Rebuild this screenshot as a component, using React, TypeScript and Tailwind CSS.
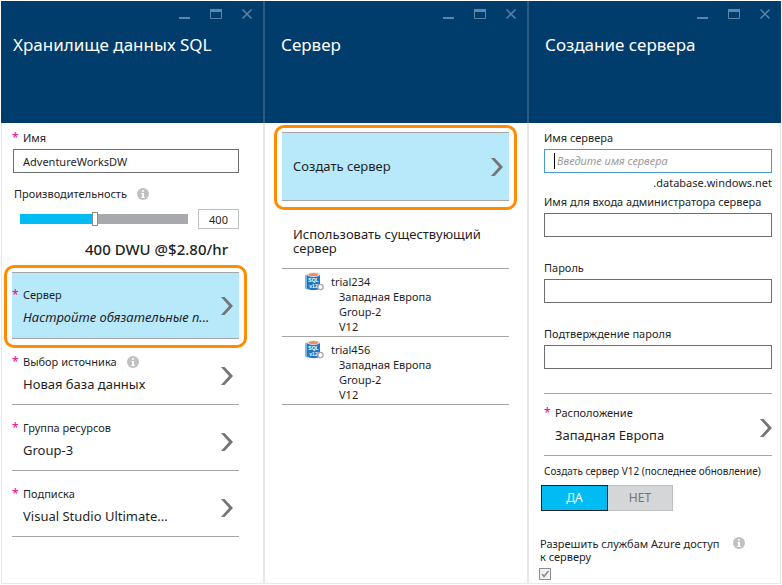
import { useId, useState } from "react";
import type { ReactNode } from "react";

function WindowControls() {
  return (
    <div className="flex justify-end gap-5 text-[#5c85aa]">
      <button type="button" aria-label="Свернуть" className="h-3 w-[11px]">
        <svg viewBox="0 0 11 12" className="h-3 w-[11px]" fill="none" stroke="currentColor" strokeWidth="2">
          <path d="M0 10H11" />
        </svg>
      </button>
      <button type="button" aria-label="Развернуть" className="h-3 w-3">
        <svg viewBox="0 0 12 12" className="h-3 w-3" fill="none" stroke="currentColor">
          <path d="M.5 1.5H11.5V10.5H.5Z" />
          <path d="M0 2.5H12" strokeWidth="3" />
        </svg>
      </button>
      <button type="button" aria-label="Закрыть" className="h-3 w-[10px]">
        <svg viewBox="0 0 10 12" className="h-3 w-[10px]" fill="none" stroke="currentColor" strokeWidth="1.5">
          <path d="M.5 1.5L9.5 10.5M9.5 1.5L.5 10.5" />
        </svg>
      </button>
    </div>
  );
}

function Blade({ title, inset, divider, children }: { title: string; inset: string; divider?: boolean; children: ReactNode }) {
  return (
    <section className={divider ? "flex min-w-0 flex-col border-l-2 border-[#e8e8e8]" : "flex min-w-0 flex-col"}>
      <header className={`h-[122px] bg-[#003c6c] pt-[7px] pr-[11px] ${divider ? "-ml-[2px] border-l-2 border-[#2b5a83]" : ""}`}>
        <WindowControls />
        <h2 className={`mt-[11px] text-[17px] leading-7 text-white ${inset}`}>{title}</h2>
      </header>
      {children}
    </section>
  );
}

function Star() {
  return <span className="w-[11px] shrink-0 text-xs text-[#ec008c]">*</span>;
}

function InfoIcon() {
  return (
    <svg viewBox="0 0 12 12" className="h-3 w-3 shrink-0" role="img" aria-label="Сведения">
      <circle cx="6" cy="6" r="6" fill="#bfc1c2" />
      <path d="M5 2.2H7V3.8H5ZM4.4 5H7V9H7.8V10H4.3V9H5.1V6H4.4Z" fill="#fff" />
    </svg>
  );
}

function Chevron() {
  return (
    <svg viewBox="0 0 12 18" className="h-[18px] w-3 shrink-0" fill="#737577" aria-hidden="true">
      <path d="M0 0H3.6L12 9L3.6 18H0L8 9Z" />
    </svg>
  );
}

function PickerRow({ label, value, info }: { label: string; value: string; info?: boolean }) {
  return (
    <button type="button" className="flex h-[66px] w-full items-center border-b border-[#a6a6a6] pt-2 pr-[6px] text-left">
      <span className="flex min-w-0 flex-1 flex-col pb-[6px]">
        <span className="flex items-center text-[11px] leading-4">
          <Star />
          {label}
          {info && <span className="ml-[10px]"><InfoIcon /></span>}
        </span>
        <span className="mt-[6px] ml-[11px] truncate text-[13px] leading-4">{value}</span>
      </span>
      <Chevron />
    </button>
  );
}

function Highlight({ children }: { children: ReactNode }) {
  return <div className="-mx-2 rounded-[10px] border-3 border-[#ff8c00] px-[5px] pt-1 pb-[6px]">{children}</div>;
}

function Field({ label, type = "text" }: { label: string; type?: string }) {
  const id = useId();
  return (
    <div className="flex flex-col gap-[3px]">
      <label htmlFor={id} className="text-[11px] leading-4">{label}</label>
      <input id={id} type={type} className="h-6 w-full border border-[#6d6e70] px-2 text-[11px] outline-none" />
    </div>
  );
}

function SqlIcon() {
  return (
    <svg viewBox="0 0 20 20" className="h-5 w-5 shrink-0 font-['Liberation_Sans',sans-serif]" aria-hidden="true">
      <path d="M0 3.5L3 2V18L0 16.5Z" fill="#7db7e0" />
      <path d="M2 2.5V15.5C2 19 15 19 15 15.5V2.5Z" fill="#2077c2" />
      <ellipse cx="8.5" cy="2.6" rx="6.5" ry="2.4" fill="#d9e9f5" />
      <ellipse cx="8.5" cy="2.6" rx="5" ry="1.7" fill="#ff8a50" />
      <text x="8.5" y="9.5" textAnchor="middle" fontSize="5" fontWeight="700" fill="#fff">SQL</text>
      <text x="8.5" y="15.5" textAnchor="middle" fontSize="5" fontWeight="700" fill="#fff">v12</text>
      <circle cx="15.5" cy="15" r="2.6" fill="#fff" stroke="#a4a8ac" strokeWidth="1.3" />
    </svg>
  );
}

function ServerItem({ name }: { name: string }) {
  return (
    <li className="border-b border-[#a6a6a6]">
      <button type="button" className="flex h-[67px] w-full items-start gap-[6px] pt-[3px] pl-[23px] text-left text-[11px] leading-[15px]">
        <SqlIcon />
        <span className="flex flex-col pt-[2px]">
          <span>{name}</span>
          <span className="flex flex-col pl-2">
            <span>Западная Европа</span>
            <span>Group-2</span>
            <span>V12</span>
          </span>
        </span>
      </button>
    </li>
  );
}

export default function App() {
  const [units, setUnits] = useState(400);
  const [modern, setModern] = useState(true);
  return (
    <main className="bg-white pt-px pr-px pl-px font-['Noto_Sans',sans-serif] text-[#1f1f1f]">
      <div className="grid grid-cols-[minmax(0,262fr)_minmax(0,264fr)_minmax(0,254fr)]">
        <Blade title="Хранилище данных SQL" inset="pl-3">
          <div className="flex-1 border-b border-l border-[#e8e8e8] pt-[7px] pr-6 pl-[10px]">
            <div className="flex flex-col gap-[3px]">
              <label htmlFor="dw-name" className="flex text-[11px] leading-4"><Star />Имя</label>
              <input id="dw-name" defaultValue="AdventureWorksDW" className="ml-px h-6 border border-[#6d6e70] px-[9px] text-[11px] outline-none" />
            </div>
            <div className="mt-[13px] flex items-center gap-[10px] pl-[2px] text-[11px] leading-4">
              <label htmlFor="units">Производительность</label>
              <InfoIcon />
            </div>
            <div className="mt-[7px] flex items-center gap-[10px] pl-2">
              <input
                id="units"
                type="range"
                min={0}
                max={900}
                step={100}
                value={units}
                onChange={(e) => setUnits(Number(e.target.value))}
                className="h-[10px] min-w-0 flex-1 appearance-none bg-[linear-gradient(to_right,#00bcf2_45%,#a7a9ac_45%)] outline-none [&::-webkit-slider-thumb]:h-[14px] [&::-webkit-slider-thumb]:w-[6px] [&::-webkit-slider-thumb]:appearance-none [&::-webkit-slider-thumb]:border [&::-webkit-slider-thumb]:border-[#8a8c8e] [&::-webkit-slider-thumb]:bg-white"
              />
              <input aria-label="DWU" value={units} readOnly className="h-5 w-[41px] border border-[#bdbfc1] text-center text-[11px] outline-none" />
            </div>
            <p className="mt-[10px] mb-[5px] pr-[11px] text-right text-[15px] leading-[21px] font-medium">{units} DWU @$2.80/hr</p>
            <div className="-mb-[9px]">
              <Highlight>
                <button type="button" className="flex h-[67px] w-full items-center border-y border-[#a6a6a6] bg-[#b8e9fa] pr-[6px] text-left">
                  <span className="flex min-w-0 flex-1 flex-col">
                    <span className="flex text-[11px] leading-4"><Star />Сервер</span>
                    <span className="mt-[6px] ml-[11px] text-[13px] leading-4 whitespace-nowrap italic">Настройте обязательные п...</span>
                  </span>
                  <Chevron />
                </button>
              </Highlight>
            </div>
            <PickerRow label="Выбор источника" value="Новая база данных" info />
            <PickerRow label="Группа ресурсов" value="Group-3" />
            <PickerRow label="Подписка" value="Visual Studio Ultimate..." />
          </div>
        </Blade>

        <Blade title="Сервер" inset="pl-4" divider>
          <div className="flex-1 border-b border-[#e8e8e8] pt-[2px] pr-[18px] pl-[17px]">
            <Highlight>
              <button type="button" className="flex h-[69px] w-full items-center justify-between border-y border-[#a6a6a6] bg-[#b8e9fa] pr-[6px] pl-[11px] text-left text-[13px]">
                Создать сервер
                <Chevron />
              </button>
            </Highlight>
            <h3 className="mt-[17px] pb-[13px] pl-[11px] text-[13px] leading-[14px]">Использовать существующий сервер</h3>
            <ul className="border-t border-[#a6a6a6]">
              <ServerItem name="trial234" />
              <ServerItem name="trial456" />
            </ul>
          </div>
        </Blade>

        <Blade title="Создание сервера" inset="pl-4" divider>
          <div className="flex-1 border-r border-b border-[#e8e8e8] pt-[7px] pr-2 pl-[15px]">
            <div className="flex flex-col gap-[3px]">
              <label htmlFor="server-name" className="text-[11px] leading-4">Имя сервера</label>
              <div className="flex h-6 items-center border border-[#4a9bd4] pl-[9px]">
                <span className="h-4 w-px bg-black" />
                <input id="server-name" placeholder="Введите имя сервера" className="w-full pl-[2px] text-[11px] outline-none placeholder:text-[#9b9b9b] placeholder:italic" />
              </div>
            </div>
            <p className="mt-[2px] mb-[3px] text-right text-[11px] leading-4">.database.windows.net</p>
            <Field label="Имя для входа администратора сервера" />
            <div className="mt-[23px]"><Field label="Пароль" type="password" /></div>
            <div className="mt-[23px]"><Field label="Подтверждение пароля" type="password" /></div>
            <button type="button" className="mt-[24px] flex h-[63px] w-full items-center border-y border-[#a6a6a6] pt-[6px] text-left">
              <span className="flex min-w-0 flex-1 flex-col pb-2">
                <span className="flex text-[11px] leading-4"><Star />Расположение</span>
                <span className="mt-[6px] ml-[11px] text-[13px] leading-4">Западная Европа</span>
              </span>
              <Chevron />
            </button>
            <p className="mt-[7px] text-[10px] leading-4 whitespace-nowrap">Создать сервер V12 (последнее обновление)</p>
            <div className="-ml-[3px] mt-[6px] flex text-xs">
              <button type="button" onClick={() => setModern(true)} aria-pressed={modern} className="h-[26px] w-[67px] border border-[#1f1f1f] bg-[#00bcf2] text-white">ДА</button>
              <button type="button" onClick={() => setModern(false)} aria-pressed={!modern} className="h-[26px] w-[65px] border border-l-0 border-[#bdbfc1] bg-[#d4d6d8] text-[#737577]">НЕТ</button>
            </div>
            <div className="-ml-1 mt-[26px] flex items-start gap-[14px]">
              <label htmlFor="azure-access" className="text-[11px] leading-[13px]">Разрешить службам Azure доступ<br />к серверу</label>
              <InfoIcon />
            </div>
            <div className="-ml-[5px] mt-[5px] mb-[3px] grid h-3 w-3">
              <input id="azure-access" type="checkbox" defaultChecked className="peer col-start-1 row-start-1 h-3 w-3 appearance-none border border-[#8a8c8e] bg-[#f1f1f1]" />
              <svg viewBox="0 0 12 12" className="pointer-events-none col-start-1 row-start-1 hidden h-3 w-3 peer-checked:block" fill="none" stroke="#8a8c8e" strokeWidth="1.5" aria-hidden="true">
                <path d="M3 6L5 8.5L9.5 3" />
              </svg>
            </div>
          </div>
        </Blade>
      </div>
    </main>
  );
}
